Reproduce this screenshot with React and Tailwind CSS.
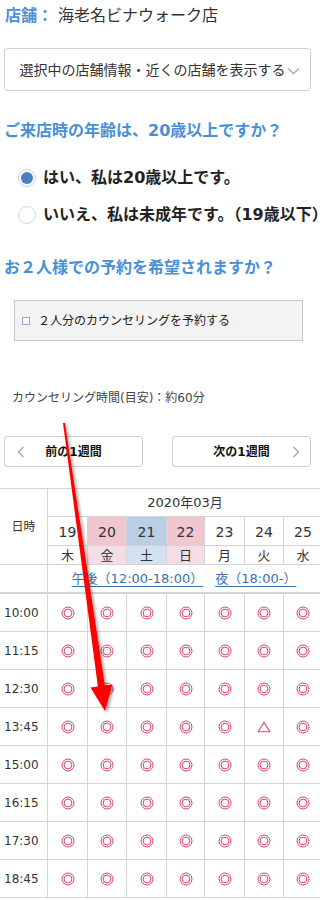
import React from "react";

const font = { fontFamily: '"DejaVu Sans","Noto Sans CJK JP",sans-serif' };

const Mark = ({ t }) =>
  t === "tri" ? (
    <svg width="14" height="12" viewBox="0 0 14 12">
      <path d="M7 1.2 L12.8 10.8 L1.2 10.8 Z" fill="none" stroke="#d6456f" strokeWidth="1.1" />
    </svg>
  ) : (
    <svg width="14" height="14" viewBox="0 0 14 14">
      <circle cx="7" cy="7" r="6" fill="none" stroke="#d6456f" strokeWidth="1" />
      <circle cx="7" cy="7" r="3.9" fill="none" stroke="#d6456f" strokeWidth="1" />
    </svg>
  );

const days = [
  { d: "19", w: "木", top: "bg-white", bot: "bg-white" },
  { d: "20", w: "金", top: "bg-[#f0c6cf]", bot: "bg-[#f6dde5]" },
  { d: "21", w: "土", top: "bg-[#b9cfe6]", bot: "bg-[#d3e2f1]" },
  { d: "22", w: "日", top: "bg-[#f0c6cf]", bot: "bg-[#f6dde5]" },
  { d: "23", w: "月", top: "bg-white", bot: "bg-white" },
  { d: "24", w: "火", top: "bg-white", bot: "bg-white" },
  { d: "25", w: "水", top: "bg-white", bot: "bg-white" },
];

const times = ["10:00", "11:15", "12:30", "13:45", "15:00", "16:15", "17:30", "18:45"];

export default function App() {
  return (
    <div className="relative w-[320px] h-[900px] overflow-hidden bg-white text-[#333]" style={font}>
      <div className="ml-[5px] mt-[4px] leading-[24px] text-[16px] whitespace-nowrap">
        <span className="font-bold text-[#4a8fd8]">店舗：</span>
        <span className="ml-[5px] text-[#333]">海老名ビナウォーク店</span>
      </div>

      <div className="ml-[4px] mt-[20px] w-[307px] h-[43px] border border-[#cfcfcf] rounded-[4px] flex items-center justify-center pl-[4px]">
        <span className="text-[14px] leading-[20px] whitespace-nowrap text-[#333]">選択中の店舗情報・近くの店舗を表示する</span>
        <svg width="13" height="8" viewBox="0 0 13 8" className="ml-[1px] mt-[2px] shrink-0">
          <path d="M1 1.5 L6.5 6.5 L12 1.5" fill="none" stroke="#aaa" strokeWidth="1.4" />
        </svg>
      </div>

      <div className="ml-[4px] mt-[28px] leading-[24px] text-[16px] font-bold text-[#4890d6] whitespace-nowrap">
        ご来店時の年齢は、20歳以上ですか？
      </div>

      <div className="ml-[18px] mt-[23px] h-[24px] flex items-center gap-[7px] whitespace-nowrap">
        <span className="w-[18px] h-[18px] rounded-full border border-[#cfcfcf] bg-white flex items-center justify-center shrink-0">
          <span className="w-[12px] h-[12px] rounded-full bg-[#4a7fc1]" />
        </span>
        <span className="text-[16px] font-bold text-[#222]">はい、私は20歳以上です。</span>
      </div>
      <div className="ml-[18px] mt-[13px] h-[24px] flex items-center gap-[7px] whitespace-nowrap">
        <span className="w-[18px] h-[18px] rounded-full border border-[#d6d6d6] bg-white shrink-0" />
        <span className="text-[16px] font-bold text-[#222]">いいえ、私は未成年です。（19歳以下）</span>
      </div>

      <div className="ml-[4px] mt-[29px] leading-[24px] text-[16px] font-bold text-[#4890d6] whitespace-nowrap">
        お２人様での予約を希望されますか？
      </div>

      <div className="ml-[14px] mt-[20px] w-[289px] h-[41px] border border-[#c8c8c8] bg-[#f3f3f3] flex items-center pl-[7px] gap-[8px]">
        <span className="w-[8px] h-[8px] border border-[#8aa9d4] bg-white shrink-0" />
        <span className="text-[12px] text-[#222] whitespace-nowrap">２人分のカウンセリングを予約する</span>
      </div>

      <div className="ml-[12px] mt-[48px] leading-[18px] text-[12px] text-[#444] whitespace-nowrap">
        カウンセリング時間(目安)：約60分
      </div>

      <div className="mt-[29px] flex px-[4px] justify-between w-[315px]">
        <div className="w-[139px] h-[31px] border border-[#cfcfcf] rounded-[3px] flex items-center relative">
          <svg width="8" height="12" viewBox="0 0 8 12" className="absolute left-[12px] top-[9px]">
            <path d="M6.5 1 L1.5 6 L6.5 11" fill="none" stroke="#aaa" strokeWidth="1.4" />
          </svg>
          <span className="w-full text-center text-[12px] font-bold text-[#111]">前の1週間</span>
        </div>
        <div className="w-[139px] h-[31px] border border-[#cfcfcf] rounded-[3px] flex items-center relative">
          <span className="w-full text-center text-[12px] font-bold text-[#111]">次の1週間</span>
          <svg width="8" height="12" viewBox="0 0 8 12" className="absolute right-[10px] top-[9px]">
            <path d="M1.5 1 L6.5 6 L1.5 11" fill="none" stroke="#aaa" strokeWidth="1.4" />
          </svg>
        </div>
      </div>

      <div className="mt-[21px] border-t border-[#d4d4d4] w-[320px] overflow-hidden">
        <div className="w-[322px] grid grid-cols-[47px_39px_38px_39px_37px_39px_38px_38px] grid-rows-[27px_28px_18px_27px] gap-px bg-[#d4d4d4] text-[#333]">
          <div className="row-span-3 bg-white flex items-center justify-center text-[12px]">日時</div>
          <div className="col-span-7 bg-white flex items-center justify-center text-[13px]">2020年03月</div>
          {days.map((x) => (
            <div key={"d" + x.d} className={`${x.top} flex items-center justify-center text-[14px] pt-[2px]`}>
              {x.d}
            </div>
          ))}
          {days.map((x) => (
            <div key={"w" + x.d} className={`${x.bot} flex items-center justify-center text-[13px] leading-none`}>
              {x.w}
            </div>
          ))}
          <div className="bg-white" />
          <div className="col-span-7 bg-white flex items-center justify-center gap-[12px] text-[13px] text-[#3a70b0] whitespace-nowrap pr-[2px]">
            <span className="underline underline-offset-[3px]">午後（12:00-18:00）</span>
            <span className="underline underline-offset-[3px]">夜（18:00-）</span>
          </div>
        </div>
        <div className="h-[2px] bg-[#d4d4d4]" />
        <div className="w-[322px] grid grid-cols-[47px_39px_38px_39px_37px_39px_38px_38px] auto-rows-[37px] gap-px bg-[#d4d4d4] border-b border-[#d4d4d4]">
          {times.map((t) => (
            <React.Fragment key={t}>
              <div className="bg-white flex items-center pl-[4px] text-[12px] text-[#333]">{t}</div>
              {days.map((x, i) => (
                <div key={t + x.d} className="bg-white flex items-center justify-center">
                  <Mark t={t === "13:45" && i === 5 ? "tri" : "o"} />
                </div>
              ))}
            </React.Fragment>
          ))}
        </div>
      </div>

      <svg className="absolute left-0 top-0 pointer-events-none" width="320" height="900" viewBox="0 0 320 900">
        <defs>
          <filter id="sh" x="-50%" y="-10%" width="200%" height="120%">
            <feDropShadow dx="2" dy="2" stdDeviation="1.6" floodColor="#000" floodOpacity="0.35" />
          </filter>
        </defs>
        <polygon
          points="63,423.1 65,422.9 104.9,685.5 112.3,684.4 105,711 90.5,687.6 97.9,686.5"
          fill="#ff0000"
          filter="url(#sh)"
        />
      </svg>
    </div>
  );
}
